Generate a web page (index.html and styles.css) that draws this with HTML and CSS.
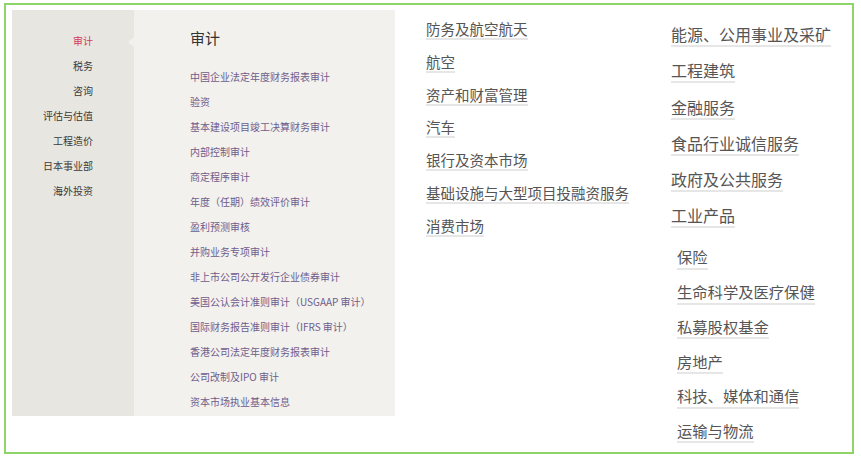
FILE: index.html
```html
<!DOCTYPE html>
<html lang="zh-CN">
<head>
<meta charset="utf-8">
<title>服务</title>
<link rel="stylesheet" href="styles.css">
</head>
<body>
<div class="frame">
  <div class="panel">
    <ul class="side">
      <li class="active">审计</li>
      <li>税务</li>
      <li>咨询</li>
      <li>评估与估值</li>
      <li>工程造价</li>
      <li>日本事业部</li>
      <li>海外投资</li>
    </ul>
    <div class="main">
      <h2 class="title">审计</h2>
      <ul class="sub">
        <li>中国企业法定年度财务报表审计</li>
        <li>验资</li>
        <li>基本建设项目竣工决算财务审计</li>
        <li>内部控制审计</li>
        <li>商定程序审计</li>
        <li>年度（任期）绩效评价审计</li>
        <li>盈利预测审核</li>
        <li>并购业务专项审计</li>
        <li>非上市公司公开发行企业债券审计</li>
        <li>美国公认会计准则审计（USGAAP 审计）</li>
        <li>国际财务报告准则审计（IFRS 审计）</li>
        <li>香港公司法定年度财务报表审计</li>
        <li>公司改制及IPO 审计</li>
        <li>资本市场执业基本信息</li>
      </ul>
    </div>
  </div>
  <ul class="col col1">
    <li>防务及航空航天</li>
    <li>航空</li>
    <li>资产和财富管理</li>
    <li>汽车</li>
    <li>银行及资本市场</li>
    <li>基础设施与大型项目投融资服务</li>
    <li>消费市场</li>
  </ul>
  <div class="col2">
    <ul class="col grp1">
      <li>能源、公用事业及采矿</li>
      <li>工程建筑</li>
      <li>金融服务</li>
      <li>食品行业诚信服务</li>
      <li>政府及公共服务</li>
      <li>工业产品</li>
    </ul>
    <ul class="col grp2">
      <li>保险</li>
      <li>生命科学及医疗保健</li>
      <li>私募股权基金</li>
      <li>房地产</li>
      <li>科技、媒体和通信</li>
      <li>运输与物流</li>
    </ul>
  </div>
</div>
</body>
</html>
```
FILE: styles.css
```css
* { box-sizing: border-box; }
html, body { margin: 0; padding: 0; background: #fff; }
body {
  font-family: "Noto Sans CJK SC", "Noto Sans", sans-serif;
  color: #333;
}
ul { list-style: none; margin: 0; padding: 0; }

.frame {
  margin: 3px 0 0 4px;
  width: 850px;
  height: 451px;
  border: 2px solid #8fd468;
  display: flex;
  align-items: flex-start;
  padding: 5px 0 0 6px;
}

.panel {
  display: flex;
  height: 406px;
  flex: none;
}

.side {
  width: 122px;
  background: #e8e6e1;
  padding: 17.5px 41px 0 0;
  text-align: right;
  font-size: 10px;
  line-height: 25px;
  color: #3a3a3a;
}
.side .active {
  color: #d23a5c;
}

.main {
  position: relative;
  width: 261px;
  background: #f2f1ee;
  padding: 18px 0 0 56px;
}
.main::before {
  content: "";
  position: absolute;
  left: -6px;
  top: 27px;
  border-right: 6px solid #f2f1ee;
  border-top: 5px solid transparent;
  border-bottom: 5px solid transparent;
}
.title {
  margin: 0;
  font-size: 15px;
  font-weight: normal;
  line-height: 20px;
  color: #333;
}
.sub {
  margin-top: 15.5px;
  font-size: 10px;
  line-height: 25px;
  color: #6e5d8c;
}

.col {
  display: flex;
  flex-direction: column;
  align-items: flex-start;
  color: #555;
}
.col li {
  border-bottom: 2px solid #e6e6e6;
}

.col1 {
  margin-left: 31px;
  width: 245px;
  padding-top: 10px;
  font-size: 14.5px;
  line-height: 18px;
  gap: 12.8px;
}

.col2 {
  display: flex;
  flex-direction: column;
  padding-top: 14px;
  gap: 19px;
}
.grp1 {
  font-size: 16px;
  line-height: 20px;
  gap: 13.3px;
}
.grp1 li { padding-bottom: 1px; }
.grp2 {
  margin-left: 6px;
  font-size: 15.3px;
  line-height: 19px;
  gap: 12.2px;
}
.grp2 li { padding-bottom: 1.5px; }
```
